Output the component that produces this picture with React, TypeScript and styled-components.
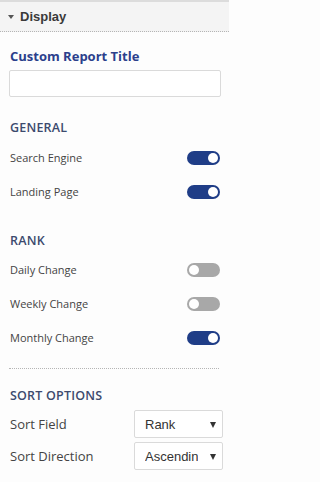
import React from "react";
import styled, { createGlobalStyle } from "styled-components";

const Global = createGlobalStyle`
  html, body { margin: 0; padding: 0; background: #fdfdfd; }
  body { font-family: "Open Sans", sans-serif; }
  * { box-sizing: border-box; }
`;

const Panel = styled.div`
  width: 229px;
  height: 482px;
  background: #fdfdfd;
  border-top: 2px solid #dcdcdc;
  overflow: hidden;
`;

const Header = styled.div`
  height: 30px;
  display: flex;
  align-items: center;
  gap: 6px;
  padding-left: 8px;
  background: #f4f4f4;
  border-bottom: 1px dotted #b5b5b5;
`;

const Caret = styled.span`
  width: 0;
  height: 0;
  border-left: 3.5px solid transparent;
  border-right: 3.5px solid transparent;
  border-top: 4px solid #555;
  margin-top: 1px;
`;

const HeaderTitle = styled.span`
  font-family: "Liberation Sans", Arial, sans-serif;
  font-weight: 700;
  font-size: 13px;
  color: #3a3a3a;
`;

const Body = styled.div`
  padding: 15px 9px 0 9px;
`;

const Title = styled.div`
  font-weight: 700;
  font-size: 13px;
  color: #2b3f8c;
  padding-left: 1px;
  line-height: 18px;
`;

const TextInput = styled.input`
  display: block;
  width: 212px;
  height: 27px;
  margin-top: 5px;
  border: 1px solid #dadada;
  border-radius: 2px;
  background: #fff;
`;

const SectionTitle = styled.div<{ $top: number }>`
  margin-top: ${(p) => p.$top}px;
  padding-left: 1px;
  font-weight: 600;
  font-size: 12.5px;
  color: #3c4a6e;
  letter-spacing: 0.2px;
  line-height: 17px;
`;

const Row = styled.div<{ $top: number }>`
  display: flex;
  justify-content: space-between;
  align-items: center;
  margin-top: ${(p) => p.$top}px;
  height: 14px;
  padding-left: 1px;
`;

const Label = styled.span`
  font-size: 11px;
  line-height: 14px;
  color: #444;
`;

const Toggle = styled.span<{ $on: boolean }>`
  position: relative;
  width: 33px;
  height: 14px;
  border-radius: 7px;
  background: ${(p) => (p.$on ? "#1f3d87" : "#a8a8a8")};
  &::after {
    content: "";
    position: absolute;
    top: 2px;
    ${(p) => (p.$on ? "right: 2px;" : "left: 2px;")}
    width: 10px;
    height: 10px;
    border-radius: 50%;
    background: #fff;
  }
`;

const Divider = styled.div`
  margin-top: 23px;
  border-top: 1px dotted #b5b5b5;
  margin-right: 1px;
`;

const SortRow = styled.div<{ $top: number }>`
  display: flex;
  align-items: center;
  justify-content: space-between;
  margin-top: ${(p) => p.$top}px;
  padding-left: 1px;
`;

const SortLabel = styled.span`
  font-size: 13px;
  line-height: 18px;
  color: #444;
`;

const Select = styled.div`
  position: relative;
  width: 89px;
  height: 28px;
  margin-right: -3px;
  border: 1px solid #dadada;
  border-radius: 2px;
  background: #fff;
  display: flex;
  align-items: center;
  padding-left: 10px;
  font-family: "Liberation Sans", Arial, sans-serif;
  font-size: 13px;
  color: #333;
  overflow: hidden;
`;

const SelectText = styled.span`
  width: 53px;
  overflow: hidden;
  white-space: nowrap;
`;

const SelectArrow = styled.span`
  position: absolute;
  right: 6px;
  top: 11px;
  width: 0;
  height: 0;
  border-left: 3px solid transparent;
  border-right: 3px solid transparent;
  border-top: 6px solid #333;
`;

export default function App() {
  return (
    <>
      <Global />
      <Panel>
        <Header>
          <Caret />
          <HeaderTitle>Display</HeaderTitle>
        </Header>
        <Body>
          <Title>Custom Report Title</Title>
          <TextInput type="text" />
          <SectionTitle $top={22}>GENERAL</SectionTitle>
          <Row $top={15}>
            <Label>Search Engine</Label>
            <Toggle $on />
          </Row>
          <Row $top={20}>
            <Label>Landing Page</Label>
            <Toggle $on />
          </Row>
          <SectionTitle $top={33}>RANK</SectionTitle>
          <Row $top={14}>
            <Label>Daily Change</Label>
            <Toggle $on={false} />
          </Row>
          <Row $top={20}>
            <Label>Weekly Change</Label>
            <Toggle $on={false} />
          </Row>
          <Row $top={20}>
            <Label>Monthly Change</Label>
            <Toggle $on />
          </Row>
          <Divider />
          <SectionTitle $top={18}>SORT OPTIONS</SectionTitle>
          <SortRow $top={6}>
            <SortLabel>Sort Field</SortLabel>
            <Select>
              <SelectText>Rank</SelectText>
              <SelectArrow />
            </Select>
          </SortRow>
          <SortRow $top={4}>
            <SortLabel>Sort Direction</SortLabel>
            <Select>
              <SelectText>Ascending</SelectText>
              <SelectArrow />
            </Select>
          </SortRow>
        </Body>
      </Panel>
    </>
  );
}
